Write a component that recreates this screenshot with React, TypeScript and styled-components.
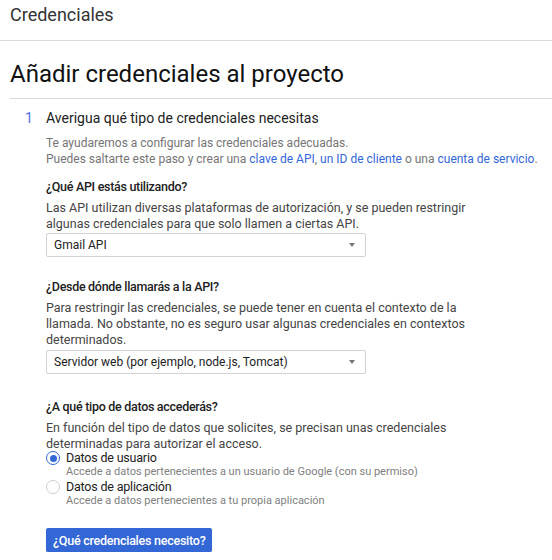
import React, { useState } from 'react';
import styled, { createGlobalStyle } from 'styled-components';

const GlobalStyle = createGlobalStyle`
    body {
        margin: 0;
        background: #fff;
        font-family: Roboto, 'Liberation Sans', Arial, sans-serif;
        color: #212121;
    }
`;

const Header = styled.header`
    height: 41px;
    box-sizing: border-box;
    border-bottom: 1px solid #d9d9d9;
    padding: 4px 0 0 10px;
    font-size: 18px;
    line-height: 22px;
    color: #333;
`;

const Main = styled.main`
    padding-left: 10px;
`;

const PageTitle = styled.h1`
    margin: 0;
    padding: 17px 0 8px;
    font-size: 24px;
    line-height: 32px;
    font-weight: 400;
    color: #111;
    border-bottom: 1px solid #d9d9d9;
`;

const Step = styled.section`
    display: grid;
    grid-template-columns: 36px 1fr;
    padding-top: 9px;
`;

const StepNumber = styled.div`
    padding-left: 15px;
    font-size: 14px;
    line-height: 20px;
    color: #4a6ee0;
`;

const StepBody = styled.div`
    display: flex;
    flex-direction: column;
`;

const StepTitle = styled.h2`
    margin: 0;
    font-size: 14px;
    line-height: 20px;
    font-weight: 400;
    color: #212121;
`;

const Intro = styled.p`
    margin: 7px 0 0;
    font-size: 12px;
    line-height: 16px;
    color: #757575;
    white-space: nowrap;
`;

const Link = styled.a`
    color: #3367d6;
    text-decoration: none;
`;

const Question = styled.h3<{ $gap: number }>`
    margin: ${p => p.$gap}px 0 0;
    font-size: 12.5px;
    line-height: 18px;
    font-weight: 500;
    letter-spacing: -0.3px;
    color: #212121;
`;

const Help = styled.p`
    margin: 4px 0 0;
    font-size: 12.5px;
    line-height: 16px;
    color: #444;
    white-space: nowrap;
`;

const SelectBox = styled.div<{ $gap: number }>`
    margin-top: ${p => p.$gap}px;
    width: 320px;
    height: 24px;
    box-sizing: border-box;
    border: 1px solid #d3d3d3;
    border-radius: 2px;
    display: flex;
    align-items: center;
    justify-content: space-between;
    padding: 0 10px 0 7px;
    font-size: 12px;
    color: #212121;
`;

const Caret = styled.span`
    width: 0;
    height: 0;
    border-left: 3.5px solid transparent;
    border-right: 3.5px solid transparent;
    border-top: 4px solid #757575;
`;

const Options = styled.div`
    display: flex;
    flex-direction: column;
    gap: 2px;
`;

const Option = styled.label`
    display: grid;
    grid-template-columns: 20px 1fr;
    cursor: pointer;
`;

const Radio = styled.span<{ $checked: boolean }>`
    margin-top: -1px;
    width: 14px;
    height: 14px;
    box-sizing: border-box;
    border-radius: 50%;
    border: 1.5px solid ${p => (p.$checked ? '#3367d6' : '#cfcfcf')};
    display: flex;
    align-items: center;
    justify-content: center;
    &::after {
        content: '';
        width: 7px;
        height: 7px;
        border-radius: 50%;
        background: ${p => (p.$checked ? '#3367d6' : 'transparent')};
    }
`;

const OptionLabel = styled.div`
    font-size: 12.5px;
    line-height: 12px;
    letter-spacing: -0.2px;
    color: #212121;
`;

const OptionHint = styled.div`
    font-size: 11px;
    line-height: 15px;
    color: #808080;
`;

const PrimaryButton = styled.button`
    margin-top: 20px;
    align-self: flex-start;
    height: 24px;
    padding: 0 7px;
    border: 0;
    border-radius: 2px;
    background: #3367d6;
    color: #fff;
    font-family: inherit;
    font-size: 12.5px;
    font-weight: 500;
    letter-spacing: -0.25px;
    box-shadow: 0 1px 1px rgba(0, 0, 0, 0.25);
`;

const options = [
    { id: 'user', label: 'Datos de usuario', hint: 'Accede a datos pertenecientes a un usuario de Google (con su permiso)' },
    { id: 'app', label: 'Datos de aplicación', hint: 'Accede a datos pertenecientes a tu propia aplicación' },
];

export default function App() {
    const [data, setData] = useState('user');

    return (
        <>
            <GlobalStyle />
            <Header>Credenciales</Header>
            <Main>
                <PageTitle>Añadir credenciales al proyecto</PageTitle>
                <Step>
                    <StepNumber>1</StepNumber>
                    <StepBody>
                        <StepTitle>Averigua qué tipo de credenciales necesitas</StepTitle>
                        <Intro>
                            Te ayudaremos a configurar las credenciales adecuadas.
                            <br />
                            Puedes saltarte este paso y crear una <Link>clave de API</Link>, <Link>un ID de cliente</Link> o una{' '}
                            <Link>cuenta de servicio</Link>.
                        </Intro>

                        <Question $gap={11}>¿Qué API estás utilizando?</Question>
                        <Help>
                            Las API utilizan diversas plataformas de autorización, y se pueden restringir
                            <br />
                            algunas credenciales para que solo llamen a ciertas API.
                        </Help>
                        <SelectBox $gap={1}>
                            Gmail API
                            <Caret />
                        </SelectBox>

                        <Question $gap={21}>¿Desde dónde llamarás a la API?</Question>
                        <Help>
                            Para restringir las credenciales, se puede tener en cuenta el contexto de la
                            <br />
                            llamada. No obstante, no es seguro usar algunas credenciales en contextos
                            <br />
                            determinados.
                        </Help>
                        <SelectBox $gap={2}>
                            Servidor web (por ejemplo, node.js, Tomcat)
                            <Caret />
                        </SelectBox>

                        <Question $gap={24}>¿A qué tipo de datos accederás?</Question>
                        <Help>
                            En función del tipo de datos que solicites, se precisan unas credenciales
                            <br />
                            determinadas para autorizar el acceso.
                        </Help>
                        <Options>
                            {options.map(o => (
                                <Option key={o.id} onClick={() => setData(o.id)}>
                                    <Radio $checked={data === o.id} />
                                    <div>
                                        <OptionLabel>{o.label}</OptionLabel>
                                        <OptionHint>{o.hint}</OptionHint>
                                    </div>
                                </Option>
                            ))}
                        </Options>
                        <PrimaryButton>¿Qué credenciales necesito?</PrimaryButton>
                    </StepBody>
                </Step>
            </Main>
        </>
    );
}
